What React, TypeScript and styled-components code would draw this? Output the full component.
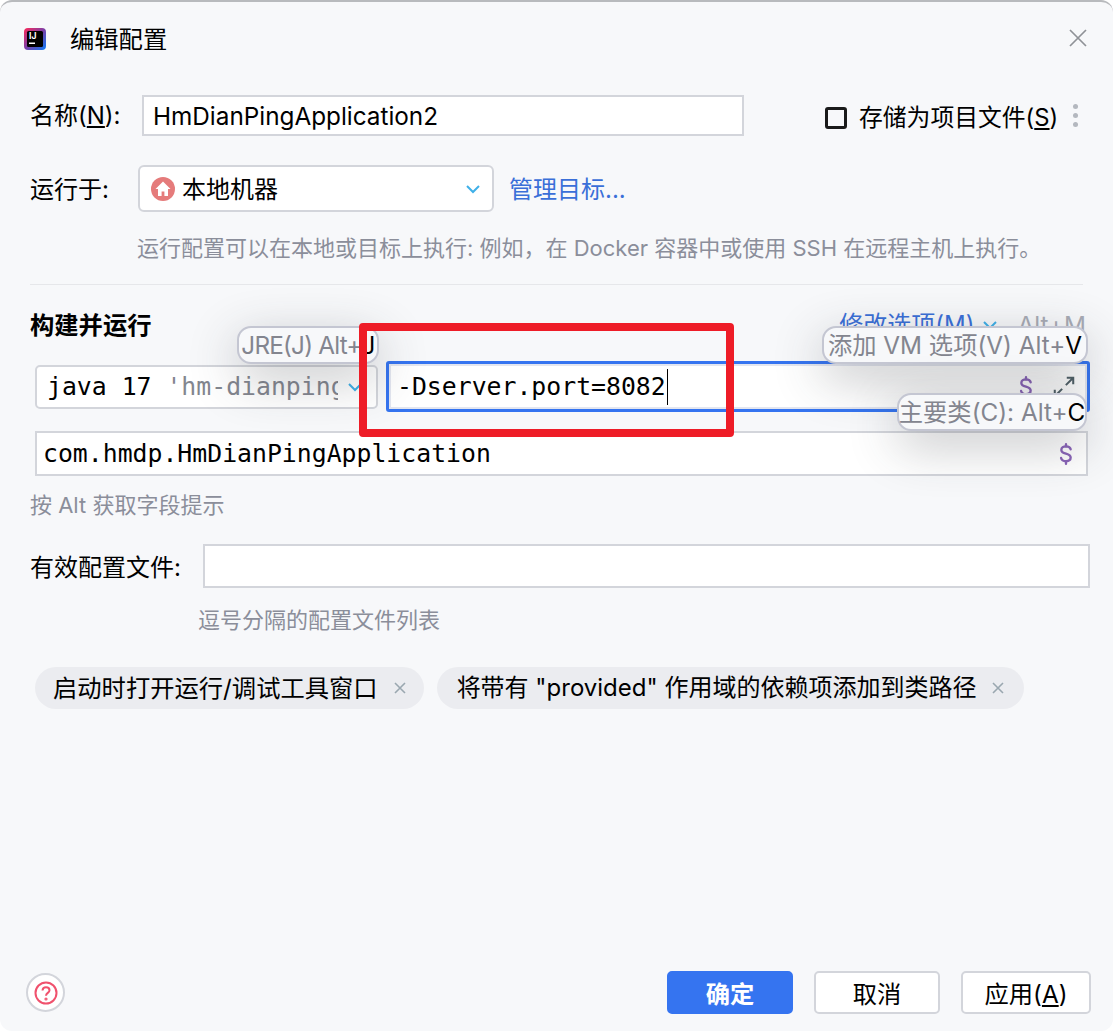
import React from "react";
import styled, { createGlobalStyle } from "styled-components";

const uiFont = `Inter, "Noto Sans CJK SC", sans-serif`;
const monoFont = `"DejaVu Sans Mono", "Noto Sans CJK SC", monospace`;

const GlobalStyle = createGlobalStyle`
  html, body {
    margin: 0;
    padding: 0;
    background: #fff;
  }
`;

const Dialog = styled.div`
  position: relative;
  box-sizing: border-box;
  width: 1113px;
  height: 1031px;
  overflow: hidden;
  display: flex;
  flex-direction: column;
  background: #f7f8fa;
  border-top: 2px solid #b8babd;
  border-radius: 12px;
  font-family: ${uiFont};
  font-size: 24.3px;
  color: #000;
  line-height: 32px;
`;

const Header = styled.div`
  display: flex;
  align-items: center;
  height: 44px;
  margin-top: 15px;
  padding: 0 26px 0 24px;
`;

const Title = styled.div`
  margin-left: 24px;
  flex: 1;
`;

const Row = styled.div<{ $top: number; $height: number }>`
  display: flex;
  align-items: center;
  margin-top: ${(p) => p.$top}px;
  height: ${(p) => p.$height}px;
  padding: 0 23px 0 30px;
`;

const Label = styled.div<{ $width: number; $low?: boolean }>`
  width: ${(p) => p.$width}px;
  flex: none;
  font-size: 24px;
  padding-top: ${(p) => (p.$low ? "3px" : "0")};
`;

const Field = styled.div<{ $width?: number; $mono?: boolean }>`
  box-sizing: border-box;
  display: flex;
  align-items: center;
  height: 100%;
  width: ${(p) => (p.$width ? `${p.$width}px` : "auto")};
  flex: ${(p) => (p.$width ? "none" : "1")};
  background: #fff;
  border: 2px solid #d3d5db;
  padding: 0 ${(p) => (p.$mono ? "6px" : "9px")};
  font-family: ${(p) => (p.$mono ? monoFont : uiFont)};
  font-size: ${(p) => (p.$mono ? "24.8px" : "24.3px")};
`;

const SelectBox = styled.div<{ $width: number }>`
  box-sizing: border-box;
  display: flex;
  align-items: center;
  width: ${(p) => p.$width}px;
  height: 100%;
  flex: none;
  background: #fff;
  border: 2px solid #d3d5db;
  border-radius: 6px;
`;

const SelectText = styled.div`
  flex: 1;
  margin-left: 7px;
  padding-top: 3px;
  font-size: 24px;
`;

const CheckLabel = styled.div`
  display: flex;
  align-items: center;
  margin: 4px 0 0 81px;
  font-size: 23.8px;
  white-space: nowrap;
`;

const CheckBox = styled.div`
  box-sizing: border-box;
  width: 22px;
  height: 22px;
  border: 3px solid #1a1a1a;
  border-radius: 3px;
  margin-right: 12px;
`;

const Dots = styled.div`
  display: flex;
  flex-direction: column;
  gap: 4px;
  margin-left: 15px;
  span {
    width: 5px;
    height: 5px;
    border-radius: 50%;
    background: #b4b8bf;
  }
`;

const Link = styled.span<{ $gap?: number; $low?: boolean }>`
  color: #3a6fd8;
  white-space: nowrap;
  font-size: 24px;
  margin-left: ${(p) => p.$gap ?? 0}px;
  padding-top: ${(p) => (p.$low ? "3px" : "0")};
`;

const Hint = styled.div<{ $left: number; $top: number }>`
  margin: ${(p) => p.$top}px 0 0 ${(p) => p.$left}px;
  font-size: 22px;
  color: #8b8e9a;
  white-space: nowrap;
`;

const Separator = styled.div`
  height: 1px;
  margin: 20px 30px 0;
  background: #e6e7ea;
`;

const SectionHead = styled.div`
  display: flex;
  align-items: center;
  justify-content: space-between;
  height: 32px;
  margin-top: 24px;
  padding: 0 27px 0 30px;
`;

const SectionTitle = styled.div`
  font-weight: 700;
`;

const SectionActions = styled.div`
  display: flex;
  align-items: center;
  white-space: nowrap;
`;

const ShortcutHint = styled.span`
  color: #a8abb5;
  margin-left: 19px;
`;

const JavaRow = styled.div`
  display: flex;
  align-items: center;
  height: 51px;
  margin-top: 20px;
  padding: 0 23px 0 35px;
`;

const JavaSelect = styled.div`
  box-sizing: border-box;
  display: flex;
  align-items: center;
  flex: none;
  width: 343px;
  height: 44px;
  background: #fff;
  border: 2px solid #d3d5db;
  border-radius: 5px;
  padding-left: 10px;
  font-family: ${monoFont};
  font-size: 24.8px;
`;

const JavaText = styled.div`
  width: 291px;
  overflow: hidden;
  white-space: pre;
  span {
    color: #83868f;
  }
`;

const VmField = styled.div`
  box-sizing: border-box;
  display: flex;
  align-items: center;
  flex: 1;
  height: 51px;
  margin-left: 8px;
  background: #fff;
  border: 3px solid #3574f0;
  border-radius: 3px;
  padding: 0 11px 0 8px;
  font-family: ${monoFont};
  font-size: 24.8px;
  box-shadow: inset 0 0 0 2px #e3e6f0;
`;

const Caret = styled.span`
  display: inline-block;
  width: 1px;
  height: 36px;
  margin-left: 1px;
  background: #000;
`;

const Spacer = styled.div`
  flex: 1;
`;

const MainClassRow = styled.div`
  height: 45px;
  margin-top: 19px;
  padding: 0 25px 0 35px;
`;

const Chips = styled.div`
  display: flex;
  gap: 13px;
  margin-top: 31px;
  padding-left: 35px;
`;

const Chip = styled.div<{ $padLeft: number; $padRight: number; $size: number }>`
  display: flex;
  align-items: center;
  height: 42px;
  padding: 0 ${(p) => p.$padRight}px 0 ${(p) => p.$padLeft}px;
  border-radius: 21px;
  background: #ebecf0;
  font-size: ${(p) => p.$size}px;
  white-space: nowrap;
`;

const ChipClose = styled.svg`
  margin-left: 15px;
`;

const Footer = styled.div`
  display: flex;
  align-items: center;
  margin-top: auto;
  margin-bottom: 17px;
  padding: 0 22px 0 26px;
`;

const HelpButton = styled.div`
  box-sizing: border-box;
  display: flex;
  align-items: center;
  justify-content: center;
  width: 39px;
  height: 39px;
  border-radius: 50%;
  background: #fff;
  border: 2px solid #d3d5db;
`;

const Button = styled.div<{ $primary?: boolean }>`
  box-sizing: border-box;
  display: flex;
  align-items: center;
  justify-content: center;
  height: 43px;
  width: 126px;
  margin-left: 21px;
  padding-top: 3px;
  border-radius: 5px;
  background: ${(p) => (p.$primary ? "#3574f0" : "#fff")};
  color: ${(p) => (p.$primary ? "#fff" : "#000")};
  border: 2px solid ${(p) => (p.$primary ? "#3574f0" : "#d3d5db")};
  font-weight: ${(p) => (p.$primary ? 700 : 400)};
`;

const ApplyButton = styled(Button)`
  width: 130px;
`;

const Tip = styled.div<{ $left: number; $top: number; $width: number; $tight?: boolean }>`
  position: absolute;
  box-sizing: border-box;
  left: ${(p) => p.$left}px;
  top: ${(p) => p.$top}px;
  width: ${(p) => p.$width}px;
  height: 38px;
  display: flex;
  align-items: center;
  justify-content: center;
  background: #f7f8fa;
  border: 2px solid #c4c6d2;
  border-radius: 14px;
  color: #83858f;
  white-space: nowrap;
  letter-spacing: ${(p) => (p.$tight ? "-0.8px" : "0")};
  box-shadow: 0 14px 50px rgba(50, 53, 60, 0.3);
  b {
    font-weight: 400;
    color: #000;
  }
`;

const RedMark = styled.div`
  position: absolute;
  box-sizing: border-box;
  left: 359px;
  top: 321px;
  width: 375px;
  height: 114px;
  border: 8px solid #ee1c27;
  border-radius: 4px;
`;

const Dollar = ({ style }: { style?: React.CSSProperties }) => (
  <svg width="14" height="22" viewBox="0 0 16 26" fill="none" stroke="#8a64b8" strokeWidth="2.8" strokeLinecap="round" style={style}>
    <path d="M13.5 7.5C13 5 10.8 4 8 4 5 4 2.5 5.5 2.5 8.2c0 5.8 11 3 11 9 0 2.8-2.6 4.3-5.5 4.3-3 0-5.2-1.2-5.8-3.8" />
    <path d="M8 1.5V4M8 21.5V24.5" />
  </svg>
);

const IdeaLogo = () => (
  <svg width="22" height="22" viewBox="0 0 22 22">
    <defs>
      <linearGradient id="ij" x1="0" y1="0" x2="1" y2="1">
        <stop offset="0" stopColor="#fe2857" />
        <stop offset="0.5" stopColor="#7a3fa8" />
        <stop offset="1" stopColor="#087cfa" />
      </linearGradient>
    </defs>
    <rect width="22" height="22" rx="4" fill="url(#ij)" />
    <rect x="3" y="3" width="16" height="16" rx="1.5" fill="#000" />
    <text x="5" y="11" fontSize="8.5" fontWeight="700" fill="#fff" fontFamily="Inter, sans-serif">IJ</text>
    <rect x="5" y="14.5" width="6" height="1.5" fill="#fff" />
  </svg>
);

const HomeIcon = () => (
  <svg width="24" height="24" viewBox="0 0 24 24" style={{ marginLeft: 11 }}>
    <circle cx="12" cy="12" r="12" fill="#e57b7b" />
    <path d="M12 4.5 4.5 12H7v7h3.6v-4.5h2.8V19H17v-7h2.5z" fill="#fff" />
  </svg>
);

const Chevron = ({ style }: { style?: React.CSSProperties }) => (
  <svg width="16" height="10" viewBox="0 0 16 10" fill="none" stroke="#3fb0e8" strokeWidth="2" style={style}>
    <path d="M2 2l6 6 6-6" />
  </svg>
);

const CloseMark = () => (
  <ChipClose width="14" height="14" viewBox="0 0 14 14" fill="none" stroke="#9aa7b0" strokeWidth="1.6">
    <path d="M2 2l10 10M12 2 2 12" />
  </ChipClose>
);

export default function App() {
  return (
    <Dialog>
      <GlobalStyle />
      <Header>
        <IdeaLogo />
        <Title>编辑配置</Title>
        <svg width="18" height="18" viewBox="0 0 18 18" fill="none" stroke="#8f9297" strokeWidth="1.7" style={{ marginBottom: 3 }}>
          <path d="M1 1l16 16M17 1 1 17" />
        </svg>
      </Header>

      <Row $top={34} $height={41}>
        <Label $width={112}>
          名称(<u>N</u>):
        </Label>
        <Field $width={602}>HmDianPingApplication2</Field>
        <CheckLabel>
          <CheckBox />
          <span>
            存储为项目文件(<u>S</u>)
          </span>
        </CheckLabel>
        <Dots>
          <span />
          <span />
          <span />
        </Dots>
      </Row>

      <Row $top={29} $height={47}>
        <Label $width={108} $low>
          运行于:
        </Label>
        <SelectBox $width={356}>
          <HomeIcon />
          <SelectText>本地机器</SelectText>
          <Chevron style={{ marginRight: 11 }} />
        </SelectBox>
        <Link $gap={15} $low>
          管理目标...
        </Link>
      </Row>

      <Hint $left={137} $top={20}>
        运行配置可以在本地或目标上执行: 例如，在 Docker 容器中或使用 SSH 在远程主机上执行。
      </Hint>
      <Separator />

      <SectionHead>
        <SectionTitle>构建并运行</SectionTitle>
        <SectionActions>
          <Link>修改选项(M)</Link>
          <Chevron style={{ marginLeft: 8 }} />
          <ShortcutHint>Alt+M</ShortcutHint>
        </SectionActions>
      </SectionHead>

      <JavaRow>
        <JavaSelect>
          <JavaText>
            java 17 <span>'hm-dianping</span>
          </JavaText>
          <Chevron style={{ marginLeft: 9 }} />
        </JavaSelect>
        <VmField>
          -Dserver.port=8082
          <Caret />
          <Spacer />
          <Dollar />
          <svg width="24" height="24" viewBox="0 0 26 26" fill="none" stroke="#4f6067" strokeWidth="2.2" style={{ marginLeft: 19 }}>
            <path d="M15 11 23 3M16 3h7v7M11 15l-8 8M3 16v7h7" />
          </svg>
        </VmField>
      </JavaRow>

      <MainClassRow>
        <Field $mono>
          com.hmdp.HmDianPingApplication
          <Spacer />
          <Dollar style={{ marginRight: 7 }} />
        </Field>
      </MainClassRow>

      <Hint $left={30} $top={13}>
        按 Alt 获取字段提示
      </Hint>

      <Row $top={23} $height={44}>
        <Label $width={173} $low>
          有效配置文件:
        </Label>
        <Field />
      </Row>

      <Hint $left={198} $top={16}>
        逗号分隔的配置文件列表
      </Hint>

      <Chips>
        <Chip $padLeft={18} $padRight={17} $size={24.3}>
          启动时打开运行/调试工具窗口
          <CloseMark />
        </Chip>
        <Chip $padLeft={20} $padRight={19} $size={24}>
          将带有 "provided" 作用域的依赖项添加到类路径
          <CloseMark />
        </Chip>
      </Chips>

      <Footer>
        <HelpButton>
          <svg width="24" height="24" viewBox="0 0 24 24" fill="none" stroke="#f0516d" strokeWidth="2">
            <circle cx="12" cy="12" r="10.5" />
            <path d="M8.5 9.5C8.7 7.3 10.2 6.2 12 6.2c2 0 3.5 1.2 3.5 3 0 2.8-3.5 2.6-3.5 5.6" />
            <circle cx="12" cy="18" r="0.6" />
          </svg>
        </HelpButton>
        <Spacer />
        <Button $primary>确定</Button>
        <Button>取消</Button>
        <ApplyButton>
          应用(<u>A</u>)
        </ApplyButton>
      </Footer>

      <Tip $left={237} $top={324} $width={142} $tight>
        JRE(J) Alt+<b>J</b>
      </Tip>
      <Tip $left={822} $top={324} $width={266}>
        添加 VM 选项(V) Alt+<b>V</b>
      </Tip>
      <Tip $left={897} $top={391} $width={190}>
        主要类(C): Alt+<b>C</b>
      </Tip>
      <RedMark />
    </Dialog>
  );
}
